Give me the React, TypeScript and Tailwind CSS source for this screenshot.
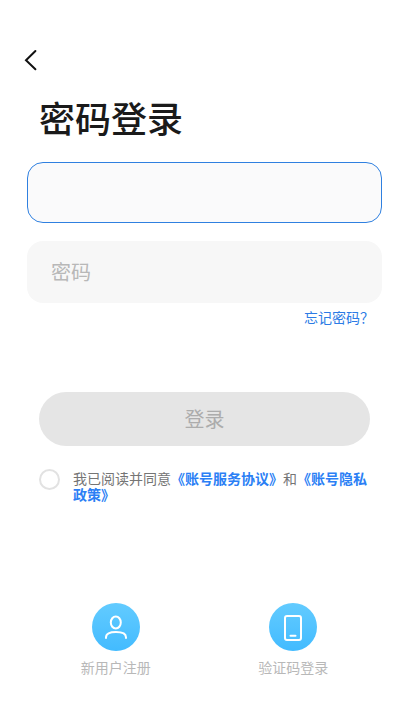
import { useState } from "react";

const CJK = "font-['Liberation_Sans','Noto_Sans_CJK_SC',sans-serif]";

function BackIcon() {
  return (
    <svg
      viewBox="0 0 14 22"
      className="h-[22px] w-[14px]"
      fill="none"
      stroke="#111"
      strokeWidth="2"
      strokeLinecap="round"
    >
      <path d="M12.400 2 3 11.300l9.400 9" />
    </svg>
  );
}

function UserIcon() {
  return (
    <svg
      viewBox="0 0 48 48"
      className="size-12"
      fill="none"
      stroke="#fff"
      strokeWidth="2"
      strokeLinecap="round"
    >
      <ellipse cx="23.800" cy="19.500" rx="5" ry="6" />
      <path d="M14 35v-.6c0-3.600 3.400-5.400 10-5.400s10 1.800 10 5.400v.6" />
    </svg>
  );
}

function PhoneIcon() {
  return (
    <svg
      viewBox="0 0 48 48"
      className="size-12"
      fill="none"
      stroke="#fff"
      strokeWidth="2"
      strokeLinecap="round"
    >
      <rect x="16" y="13" width="16" height="24" rx="2" />
      <path d="M21.500 32.700h5" />
    </svg>
  );
}

const entries = [
  { label: "新用户注册", icon: <UserIcon /> },
  { label: "验证码登录", icon: <PhoneIcon /> },
];

function App() {
  const [account, setAccount] = useState("");
  const [password, setPassword] = useState("");
  const [agreed, setAgreed] = useState(false);

  return (
    <main
      lang="zh-CN"
      className={`flex min-h-screen flex-col bg-white px-[27px] pt-[49px] ${CJK}`}
    >
      <header className="-ml-1 flex">
        <button type="button" aria-label="返回">
          <BackIcon />
        </button>
      </header>

      <h1 className="mt-7 px-3 text-4xl leading-[44px] font-medium text-[#1a1a1a]">
        密码登录
      </h1>

      <form className="mt-[19px]" onSubmit={(e) => e.preventDefault()}>
        <div className="flex flex-col gap-[18px]">
          <input
            type="text"
            aria-label="账号"
            value={account}
            onChange={(e) => setAccount(e.target.value)}
            className="h-[61px] w-full rounded-2xl border border-[#2f80e0] bg-[#fafafb] px-6 pt-0.5 text-xl outline-none"
          />
          <input
            type="password"
            aria-label="密码"
            placeholder="密码"
            value={password}
            onChange={(e) => setPassword(e.target.value)}
            className="h-[62px] w-full rounded-2xl bg-[#f7f7f7] px-6 pt-0.5 text-xl outline-none placeholder:text-[#b8b8b8]"
          />
        </div>

        <div className="mt-[5px] flex justify-end px-2">
          <a href="#forgot" className="text-sm text-[#2c7be5]">
            忘记密码？
          </a>
        </div>

        <div className="mt-16 px-3">
          <button
            type="submit"
            className="h-[54px] w-full rounded-full bg-[#e5e5e5] pt-0.5 text-xl text-[#acacac]"
          >
            登录
          </button>

          <div className="mt-[23px] flex items-start gap-[13px]">
            <input
              id="agree"
              type="checkbox"
              checked={agreed}
              onChange={(e) => setAgreed(e.target.checked)}
              className="size-[21px] shrink-0 appearance-none rounded-full border-2 border-[#e2e2e2] checked:border-[#2b7ff5] checked:bg-[#2b7ff5]"
            />
            <label
              htmlFor="agree"
              className="pt-0.5 text-sm leading-4 break-all text-[#757575]"
            >
              我已阅读并同意
              <a href="#service" className="font-bold text-[#2b7ff5]">
                《账号服务协议》
              </a>
              和
              <a href="#privacy" className="font-bold text-[#2b7ff5]">
                《账号隐私政策》
              </a>
            </label>
          </div>
        </div>
      </form>

      <nav className="mt-[100px] grid grid-cols-2 pb-8">
        {entries.map((entry) => (
          <button
            key={entry.label}
            type="button"
            className="flex flex-col items-center gap-[7px] text-sm text-[#b8b8b8]"
          >
            <span className="rounded-full bg-linear-to-b from-[#62cbff] to-[#42bbff]">
              {entry.icon}
            </span>
            {entry.label}
          </button>
        ))}
      </nav>
    </main>
  );
}

export default App;
